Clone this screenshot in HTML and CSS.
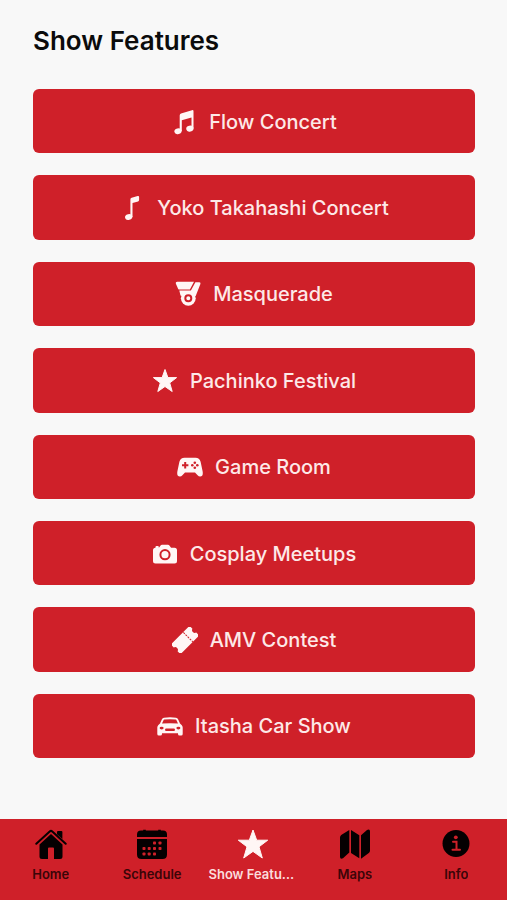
FILE: index.html
```html
<!DOCTYPE html>
<html lang="en">
<head>
<meta charset="utf-8">
<meta name="viewport" content="width=device-width, initial-scale=1">
<title>Show Features</title>
<link rel="stylesheet" href="styles.css">
</head>
<body>
<main class="content">
  <h1 class="title">Show Features</h1>
  <div class="features">
    <button class="feature" type="button">
      <svg class="icon" viewBox="0 0 26 26" aria-hidden="true"><path d="M8.700 6.400q0-1.400 1.300-1.800L21 1.200q1.500-.4 1.500 1v17.400h-2V8.600L10.800 11.200V22h-2.100z"/><ellipse cx="7" cy="22.200" rx="3.700" ry="2.900" transform="rotate(-14 7 22.200)"/><ellipse cx="18.900" cy="19.600" rx="3.700" ry="2.900" transform="rotate(-14 18.900 19.600)"/></svg>
      <span>Flow Concert</span>
    </button>
    <button class="feature" type="button">
      <svg class="icon" viewBox="0 0 26 26" aria-hidden="true"><path d="M11.400 4.400q0-1.300 1.300-1.700l6-1.600q1.400-.3 1.400 1v3q0 1-1 1.300l-5.600 1.500V22h-2.100z"/><ellipse cx="9.700" cy="22" rx="3.700" ry="2.900" transform="rotate(-14 9.700 22)"/></svg>
      <span>Yoko Takahashi Concert</span>
    </button>
    <button class="feature" type="button">
      <svg class="icon" viewBox="0 0 26 26" aria-hidden="true"><path d="M2.200.8H19L14.900 8.600H4.300Q3.600 8.600 3.200 7.900L.9 2.700Q.2.900 2.200.8z"/><path d="M20.400 1.200l4 .1q1.500.2 1 1.700L20.700 15 13.300 17.300 5.500 14.500 4.300 9.500H15.900z"/><circle cx="13.300" cy="17.300" r="7.400"/><circle class="cut" cx="13.300" cy="17.300" r="3"/></svg>
      <span>Masquerade</span>
    </button>
    <button class="feature" type="button">
      <svg class="icon" viewBox="0 0 26 26" aria-hidden="true"><path class="round" d="M13 1.500l2.900 8.100h8.700l-6.900 5.300 2.500 8.600-7.200-5-7.200 5 2.500-8.600-6.900-5.300h8.700z"/></svg>
      <span>Pachinko Festival</span>
    </button>
    <button class="feature" type="button">
      <svg class="icon" viewBox="0 0 26 26" aria-hidden="true"><path d="M7.500 3.800h11q4 0 5.100 4l2 9.500q.9 5.300-2.500 5.300-1.400 0-2.500-1.400L18 18.400H8l-2.600 2.800Q4.300 22.600 2.900 22.600-.5 22.600.4 17.300l2-9.500q1.100-4 5.100-4z"/><path class="cut" d="M5 11.300h6.400M8.200 8.100v6.400"/><g class="hole"><circle cx="17.800" cy="8.800" r="1.300"/><circle cx="17.800" cy="13.800" r="1.300"/><circle cx="15.300" cy="11.300" r="1.300"/><circle cx="20.300" cy="11.300" r="1.300"/></g></svg>
      <span>Game Room</span>
    </button>
    <button class="feature" type="button">
      <svg class="icon" viewBox="0 0 26 26" aria-hidden="true"><path d="M3.500 6.800h3.400L8.600 4.500Q9.100 3.800 10 3.800h6q.9 0 1.400.7l1.700 2.300h3.400q2.500 0 2.500 2.500V20q0 2.500-2.500 2.500h-19Q1 22.500 1 20V9.300q0-2.500 2.500-2.500z"/><rect x="3.500" y="4.900" width="3.300" height="3" rx="1"/><circle class="cut" cx="13" cy="13.700" r="4.600"/></svg>
      <span>Cosplay Meetups</span>
    </button>
    <button class="feature" type="button">
      <svg class="icon" viewBox="0 0 26 26" aria-hidden="true"><g transform="rotate(-45 13 13)"><path d="M1.500 6.200h23q1.700 0 1.700 1.700v2.400a2.800 2.800 0 0 0 0 5.400v2.400q0 1.700-1.700 1.700h-23q-1.700 0-1.700-1.700v-2.400a2.800 2.800 0 0 0 0-5.400V7.900q0-1.700 1.700-1.700z"/><path class="perforation" d="M17.200 6.500v13.500"/></g></svg>
      <span>AMV Contest</span>
    </button>
    <button class="feature" type="button">
      <svg class="icon" viewBox="0 0 26 26" aria-hidden="true"><path fill-rule="evenodd" d="M7 4.700Q13 3.600 19 4.700q1.500.3 2.200 1.800l1.800 4.100 1.600 1.300q1.100 1 1.100 2.600V21q0 1.600-1.600 1.600h-1.500q-1.600 0-1.600-1.600v-.7H5V21q0 1.600-1.600 1.600H1.900Q.3 22.600.3 21v-6.500q0-1.600 1.100-2.600L3 10.600l1.800-4.100Q5.500 5 7 4.700zM7.400 6.600Q6.700 6.800 6.400 7.500L5 10.600q8-.9 16 0l-1.400-3.100q-.3-.7-1-.9-5.600-.8-11.200 0z"/><g class="hole"><ellipse cx="4.600" cy="15.100" rx="2" ry="1.400"/><ellipse cx="21.400" cy="15.100" rx="2" ry="1.400"/><rect x="8" y="15.600" width="10" height="2.400" rx="1.200"/></g></svg>
      <span>Itasha Car Show</span>
    </button>
  </div>
</main>
<nav class="tabs" aria-label="Main">
  <a class="tab" href="#home">
    <svg class="tab-icon" viewBox="0 0 32 32" aria-hidden="true"><path d="M1.300 15.800L14.700 3.500q1.300-1.200 2.600 0L30.700 15.800" class="roof"/><path d="M23 3h3.300q1.100 0 1.100 1.100v7L22 6.300V4q0-1 1-1z"/><path d="M16 6L27.500 16.500v12q0 2.500-2.500 2.500H19V20.500q0-1-1-1h-4q-1 0-1 1V31H7Q4.500 31 4.500 28.500v-12z"/></svg>
    <span class="tab-label">Home</span>
  </a>
  <a class="tab" href="#schedule">
    <svg class="tab-icon" viewBox="0 0 32 32" aria-hidden="true"><path d="M5 2.500h2.200V1.700h2.600v.8h12.400v-.8h2.600v.8H27q4 0 4 4V9H1V6.500q0-4 4-4zM1 11h30v15.500q0 4.500-4.500 4.500h-21Q1 31 1 26.500z"/><g class="hole"><rect x="17" y="13.500" width="3" height="3" rx=".8"/><rect x="22.500" y="13.500" width="3" height="3" rx=".8"/><rect x="6.500" y="19" width="3" height="3" rx=".8"/><rect x="11.700" y="19" width="3" height="3" rx=".8"/><rect x="17" y="19" width="3" height="3" rx=".8"/><rect x="22.500" y="19" width="3" height="3" rx=".8"/><rect x="6.500" y="24.500" width="3" height="3" rx=".8"/><rect x="11.700" y="24.500" width="3" height="3" rx=".8"/><rect x="17" y="24.500" width="3" height="3" rx=".8"/></g></svg>
    <span class="tab-label">Schedule</span>
  </a>
  <a class="tab active" href="#features" aria-current="page">
    <svg class="tab-icon" viewBox="0 0 32 32" aria-hidden="true"><path class="round" d="M16 2l3.700 10.200h11L22 18.800l3.300 11.200L16 23.400 6.700 30 10 18.800l-8.700-6.600h11z"/></svg>
    <span class="tab-label">Show Features</span>
  </a>
  <a class="tab" href="#maps">
    <svg class="tab-icon" viewBox="0 0 32 32" aria-hidden="true"><path d="M10.300 2v22.500L4 30.300q-3 1.300-3-1.500V9.500Q1 8 2.200 7zM12 2l8.300 5.300v23L12 25zM22 7.300L28 2q3-1.500 3 1.500v19q0 1.500-1.200 2.500L22 30.700z"/></svg>
    <span class="tab-label">Maps</span>
  </a>
  <a class="tab" href="#info">
    <svg class="tab-icon" viewBox="0 0 32 32" aria-hidden="true"><circle cx="16" cy="15.500" r="13.500"/><circle class="hole" cx="15.800" cy="9.300" r="1.900"/><path class="info-mark" d="M13 13.800h3.500v8M12.500 21.800h7.500"/></svg>
    <span class="tab-label">Info</span>
  </a>
</nav>
</body>
</html>
```

FILE: styles.css
```css
:root {
  --red: #cf2029;
  --page: #f8f8f8;
}

* {
  box-sizing: border-box;
}

body {
  margin: 0;
  min-height: 100vh;
  display: flex;
  flex-direction: column;
  background: var(--page);
  font-family: Inter, "Liberation Sans", sans-serif;
}

.content {
  flex: 1;
  display: flex;
  flex-direction: column;
  gap: 32px;
  padding: 25px 32px 61px 33px;
}

.title {
  margin: 0;
  font-size: 26px;
  line-height: 32px;
  font-weight: 600;
  color: #0b0b0b;
}

.features {
  flex: 1;
  display: grid;
  grid-auto-rows: minmax(48px, 1fr);
  gap: 22px;
}

.feature {
  display: flex;
  align-items: center;
  justify-content: center;
  gap: 12px;
  padding: 1px 16px 0;
  border: 0;
  border-radius: 6px;
  background: var(--red);
  color: #fde9e8;
  font: 500 20px/24px Inter, "Liberation Sans", sans-serif;
  cursor: pointer;
}

.icon {
  flex: none;
  width: 26px;
  height: 26px;
  fill: #fff6f5;
}

.round {
  stroke: #fff6f5;
  stroke-width: 1;
  stroke-linejoin: round;
}

.hole {
  fill: var(--red);
}

.cut {
  fill: none;
  stroke: var(--red);
  stroke-width: 2;
}

.perforation {
  fill: none;
  stroke: var(--red);
  stroke-width: 1;
  stroke-dasharray: 2 1;
}

.tabs {
  display: grid;
  grid-template-columns: repeat(5, minmax(0, 1fr));
  padding: 9px 0 18px;
  background: var(--red);
}

.tab {
  display: flex;
  flex-direction: column;
  align-items: center;
  gap: 6px;
  color: #3b0508;
  text-decoration: none;
}

.tab-icon {
  width: 32px;
  height: 32px;
  fill: #050001;
}

.roof {
  fill: none;
  stroke: #050001;
  stroke-width: 2;
  stroke-linecap: round;
}

.info-mark {
  fill: none;
  stroke: var(--red);
  stroke-width: 2;
  stroke-linecap: round;
}

.tab-label {
  max-width: 90px;
  overflow: hidden;
  text-overflow: ellipsis;
  white-space: nowrap;
  font-size: 13px;
  line-height: 16px;
  font-weight: 600;
}

.active {
  color: #fbdcdc;
}

.active .tab-icon {
  fill: #fff6f5;
}
```
